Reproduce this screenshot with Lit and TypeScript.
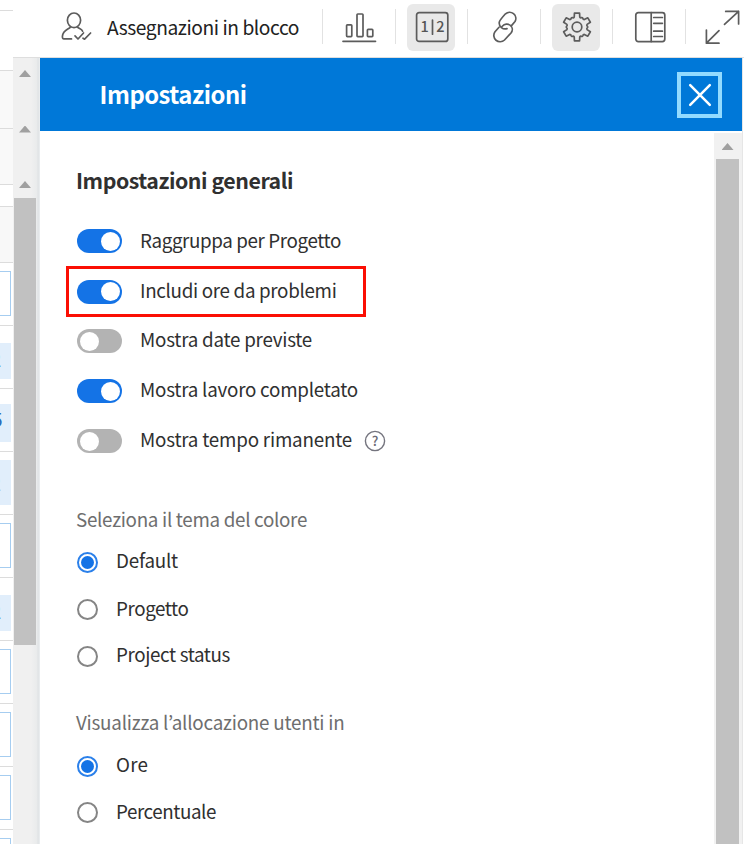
import { LitElement, html, svg, css } from "lit";
import { customElement, property } from "lit/decorators.js";
import { classMap } from "lit/directives/class-map.js";

/* A single line of text whose tracking is adjusted so that it spans a given width. */
@customElement("fit-text")
export class FitText extends LitElement {
  static styles = css`
    :host { display: inline-block; white-space: nowrap; }
  `;
  @property({ type: Number }) width = 0;
  @property() text = "";

  updated() {
    const line = this.renderRoot.querySelector("span")!;
    line.style.letterSpacing = "0";
    const natural = line.getBoundingClientRect().width;
    line.style.letterSpacing = `${(this.width - natural) / this.text.length}px`;
  }

  render() {
    return html`<span>${this.text}</span>`;
  }
}

type Switch = { label: string; width: number; on: boolean; boxed?: boolean; help?: boolean };
type Choice = { label: string; width: number; on: boolean; high?: boolean };

const switches: Switch[] = [
  { label: "Raggruppa per Progetto", width: 201, on: true },
  { label: "Includi ore da problemi", width: 196.5, on: true, boxed: true },
  { label: "Mostra date previste", width: 172, on: false },
  { label: "Mostra lavoro completato", width: 218, on: true },
  { label: "Mostra tempo rimanente", width: 212, on: false, help: true },
];

const themes: Choice[] = [
  { label: "Default", width: 62, on: true, high: true },
  { label: "Progetto", width: 72.5, on: false },
  { label: "Project status", width: 114, on: false },
];

const units: Choice[] = [
  { label: "Ore", width: 32, on: true },
  { label: "Percentuale", width: 100, on: false },
];

const rows = [
  { kind: "outlined", text: "" },
  { kind: "filled", text: "2" },
  { kind: "filled mid", text: "5" },
  { kind: "filled tall", text: "2" },
  { kind: "outlined", text: "" },
  { kind: "filled", text: "2" },
  { kind: "outlined", text: "" },
  { kind: "outlined", text: "" },
  { kind: "outlined", text: "" },
  { kind: "outlined", text: "" },
];

const gear = (() => {
  const at = (r: number, a: number) => `${(20 + r * Math.cos(a)).toFixed(2)} ${(19 + r * Math.sin(a)).toFixed(2)}`;
  let d = "";
  for (let i = 0; i < 6; i++) {
    const a = (i * Math.PI) / 3 - Math.PI / 2;
    d += `${i ? "L" : "M"}${at(10.4, a - 0.27)}L${at(14.2, a - 0.18)}L${at(14.2, a + 0.18)}L${at(10.4, a + 0.27)}`;
    d += `Q${at(9.6, a + 0.36)} ${at(10.3, a + 0.44)}Q${at(11.2, a + Math.PI / 6)} ${at(10.3, a + Math.PI / 3 - 0.44)}Q${at(9.6, a + Math.PI / 3 - 0.36)} ${at(10.4, a + Math.PI / 3 - 0.27)}`;
  }
  return d + "Z";
})();

const tools = [
  { active: false, icon: svg`<rect x="7.6" y="16.8" width="5.2" height="11.8" rx=".8"/><rect x="18" y="6" width="6" height="22.6" rx=".8"/><rect x="28.4" y="21.4" width="5.4" height="7.2" rx=".8"/><path d="M4 33.3H36.5"/>` },
  { active: true, icon: svg`<rect x="4.6" y="4.6" width="31.2" height="28.8" rx="2.5"/><path d="M20.5 12V26.2"/><text x="8.6" y="24.4">1</text><text x="24.2" y="24.4">2</text>` },
  { active: false, icon: svg`<path d="M23 20.6C19 22 14.6 18.5 15.3 14.2C15.5 12.8 19.5 8 21.5 5.8A6.2 6.2 0 0 1 31 13.5L27.5 17.6M18.3 18.3C20.5 15.8 24 15.5 26.3 17.3C28.7 19.2 28.9 22.5 27 25L20.5 32A6.3 6.3 0 0 1 11 23.8L15 19.3"/>` },
  { active: true, icon: svg`<path d=${gear}/><circle cx="20" cy="19" r="4.8"/>` },
  { active: false, icon: svg`<rect x="5.8" y="4.6" width="29" height="29" rx="2.5"/><path d="M21.2 4.6V33.6M23.7 9.5H32.4M23.7 15.3H32.4M23.7 23.2H32.4M23.7 28.5H32.4"/>` },
  { active: false, icon: svg`<path d="M22.5 16.3L36.6 3.3M23.7 3.4H36.6V16M17 22.7L4.4 35.2M4.4 22V35.2H17"/>` },
];

@customElement("app-root")
export class AppRoot extends LitElement {
  static styles = css`
    :host {
      display: block; width: 744px; height: 844px; overflow: hidden; background: #fff; color: #303030;
      font: 18.8px/24px "Noto Sans CJK KR", "Noto Sans", sans-serif;
    }
    * { box-sizing: border-box; }
    .page { display: grid; grid-template-columns: 13px 1fr; height: 844px; }
    svg { display: block; fill: none; stroke: #5c5c5c; stroke-width: 1.7; stroke-linejoin: round; stroke-linecap: round; flex: none; }
    svg text { fill: #555; stroke: none; font-size: 14.5px; font-weight: 500; }

    .grid { overflow: hidden; height: 844px; }
    .band { border-bottom: 1px solid #dcdcdc; }
    .b1 { height: 11px; }
    .b2 { height: 60px; }
    .b3 { height: 58px; background: #f9f9f9; }
    .b4 { height: 56px; background: #f9f9f9; }
    .b5 { height: 22px; }
    .b6 { height: 56px; background: #f8f8f8; }
    .row { height: 63px; padding-top: 8px; border-bottom: 1px solid #dcdcdc; }
    .cell { width: 11px; height: 45px; display: flex; align-items: center; justify-content: flex-end; padding: 0 9.6px 5px 0; overflow: hidden; color: #5a94cc; font-size: 19px; }
    .outlined { border: 1px solid #a6cdf0; border-left: 0; }
    .filled { background: #e1eefb; height: 36px; margin-top: 9px; }
    .mid { height: 38px; margin-top: 7px; color: #2a6bb8; padding: 0 8.4px 8px 0; }
    .tall { height: 45px; margin-top: 0; color: #a9c9e8; padding-bottom: 0; }

    .main { display: flex; flex-direction: column; height: 844px; min-width: 0; }
    .toolbar { display: flex; align-items: center; height: 58px; border-bottom: 1px solid #dedede; flex: none; overflow: hidden; padding-bottom: 3px; }
    .bulk { display: flex; align-items: center; width: 309px; padding-left: 43px; flex: none; font-size: 19.2px; color: #222; }
    .bulk fit-text { margin: 0 0 1px 11px; }
    .tool { width: 72.6px; flex: none; display: flex; align-items: center; justify-content: center; height: 47px; position: relative; }
    .tool::before { content: ""; width: 1px; height: 35px; background: #e2e2e2; position: absolute; left: 0; top: 5px; }
    .button { width: 48px; height: 47px; border-radius: 6px; display: flex; align-items: center; justify-content: center; padding: 2px 0 0 2px; }
    .active { background: #e9e9e9; }

    .body { flex: 1; display: grid; grid-template-columns: 27px 702px 2px; min-height: 0; }
    .edge { background: #fff; border-left: 1px solid #e6e6e6; }
    .outer { background: linear-gradient(90deg, #f0f0f0 0 18px, #e9ebec 24px, #dfe2e4 25px, #eceff1 27px); padding: 12px 4px 0 1px; }
    .arrow { width: 12px; height: 7px; margin: 0 auto 48.5px; background: #a0a0a0; clip-path: polygon(50% 0, 100% 100%, 0 100%); }
    .outer .arrow:nth-child(3) { margin-bottom: 10px; }
    .outer .thumb { height: 447px; background: #c1c1c1; }

    .panel { display: flex; flex-direction: column; min-height: 0; background: #fff; }
    .header { height: 73px; flex: none; background: #0078d8; color: #fff; display: flex; align-items: center; justify-content: space-between; padding: 0 20px 0 59.5px; font-size: 23.8px; font-weight: 700; }
    .header fit-text { margin-bottom: 2px; }
    .close { width: 45px; height: 46px; border: 4.5px solid #93dbff; display: flex; align-items: center; justify-content: center; }
    .close svg { stroke: #fff; stroke-width: 2.5; }
    .scroller { flex: 1; display: grid; grid-template-columns: 1fr 28px; min-height: 0; }
    .inner { margin-top: 2px; background: #f1f1f1; padding: 10px 3px 0 2px; overflow: hidden; }
    .inner .arrow { margin-bottom: 8.5px; }
    .inner .thumb { height: 690px; background: #c1c1c1; }

    .content { padding: 34px 0 0 26px; overflow: hidden; }
    h2 { margin: 0 0 21px 10px; font-size: 21.3px; line-height: 30px; font-weight: 700; height: 30px; color: #303030; }
    .option { height: 50px; width: 300px; padding-left: 11px; display: flex; align-items: center; position: relative; }
    .boxed { height: 51px; margin-bottom: -1px; border: 3px solid #fb0f04; padding-left: 8px; }
    .switch { width: 45px; height: 24px; border-radius: 12px; background: #b3b3b3; padding: 2.5px; display: flex; flex: none; margin-right: 18px; }
    .switch.on { background: #1473e6; justify-content: flex-end; }
    .knob { width: 19px; height: 19px; border-radius: 50%; background: #fff; }
    .option fit-text { margin-bottom: 3px; }
    .boxed ~ .option fit-text { margin-bottom: 5px; }
    .help { margin-left: 12px; width: 22px; stroke: #74747e; stroke-width: 1.4; }
    .help text { font-size: 13.5px; fill: #6a6a74; text-anchor: middle; }
    .title { margin: 40.5px 0 9px 10px; height: 24px; color: #6e6e6e; }
    .second { margin: 30.2px 0 8.6px 10px; }
    .choice { height: 46.8px; padding-left: 11px; display: flex; align-items: center; }
    .radio { width: 21px; height: 21px; border: 2px solid #858585; border-radius: 50%; margin-right: 18px; display: flex; align-items: center; justify-content: center; flex: none; }
    .radio.on { border-color: #2b80ea; }
    .dot { width: 13px; height: 13px; border-radius: 50%; background: #1473e6; }
    .choice fit-text { margin-bottom: 4px; }
    .choice.high fit-text { margin-bottom: 6px; }
  `;

  private choices(list: Choice[]) {
    return list.map(
      (c) => html`<div class=${classMap({ choice: true, high: !!c.high })}>
        <span class=${classMap({ radio: true, on: c.on })}>${c.on ? html`<span class="dot"></span>` : ""}</span>
        <fit-text .text=${c.label} .width=${c.width}></fit-text>
      </div>`
    );
  }

  render() {
    return html`
      <div class="page">
        <div class="grid">
          ${[1, 2, 3, 4, 5, 6].map((n) => html`<div class="band b${n}"></div>`)}
          ${rows.map((r) => html`<div class="row"><div class="cell ${r.kind}">${r.text}</div></div>`)}
        </div>
        <div class="main">
          <div class="toolbar">
            <div class="bulk">
              <svg width="40" height="40" viewBox="0 0 40 40">
                <ellipse cx="18" cy="13.3" rx="6.6" ry="7.3"/>
                <path d="M14.6 19.6C13.6 22.4 6.9 22.6 6.4 29.4C6.3 31 6.8 31.9 8 31.9H15.5M21.3 19.6C22 21.6 25.6 21.5 26.6 24.2M19 28.8L22 32L27.5 26M27 31.2L28.6 32.2L34.6 26"/>
              </svg>
              <fit-text .text=${"Assegnazioni in blocco"} .width=${192}></fit-text>
            </div>
            ${tools.map((t) => html`<div class="tool"><div class=${classMap({ button: true, active: t.active })}><svg width="40" height="40" viewBox="0 0 40 40">${t.icon}</svg></div></div>`)}
          </div>
          <div class="body">
            <div class="outer">
              <div class="arrow"></div><div class="arrow"></div><div class="arrow"></div>
              <div class="thumb"></div>
            </div>
            <div class="panel">
              <div class="header">
                <fit-text .text=${"Impostazioni"} .width=${147}></fit-text>
                <div class="close"><svg width="24" height="24" viewBox="0 0 24 24"><path d="M2.2 2.2L21.8 21.8M21.8 2.2L2.2 21.8"/></svg></div>
              </div>
              <div class="scroller">
                <div class="content">
                  <h2><fit-text .text=${"Impostazioni generali"} .width=${217}></fit-text></h2>
                  ${switches.map(
                    (s) => html`<div class=${classMap({ option: true, boxed: !!s.boxed })}>
                      <span class=${classMap({ switch: true, on: s.on })}><span class="knob"></span></span>
                      <fit-text .text=${s.label} .width=${s.width}></fit-text>
                      ${s.help ? html`<svg class="help" width="22" height="22" viewBox="0 0 22 22"><circle cx="11" cy="11" r="9.6"/><text x="11" y="15.8">?</text></svg>` : ""}
                    </div>`
                  )}
                  <div class="title"><fit-text .text=${"Seleziona il tema del colore"} .width=${231}></fit-text></div>
                  ${this.choices(themes)}
                  <div class="title second"><fit-text .text=${"Visualizza l’allocazione utenti in"} .width=${268.5}></fit-text></div>
                  ${this.choices(units)}
                </div>
                <div class="inner"><div class="arrow"></div><div class="thumb"></div></div>
              </div>
            </div>
            <div class="edge"></div>
          </div>
        </div>
      </div>
    `;
  }
}
